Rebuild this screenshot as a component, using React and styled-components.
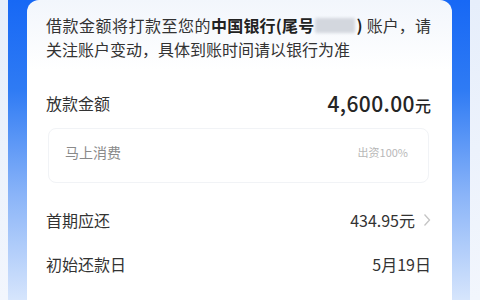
import React from "react";
import styled, { createGlobalStyle } from "styled-components";

const Global = createGlobalStyle`
  html, body { margin: 0; padding: 0; }
  body {
    font-family: "Noto Sans CJK SC", "Noto Sans", sans-serif;
    background: #eef3fb;
    -webkit-font-smoothing: antialiased;
  }
`;

const Page = styled.div`
  height: 300px;
  overflow: hidden;
  padding: 0 10px 0 8px;
  background: linear-gradient(180deg, #e6eefb 0%, #f2f6fd 100%);
`;

const Frame = styled.div`
  height: 100%;
  padding: 0 18px 0 19px;
  background: linear-gradient(180deg, #1768f5 0%, #2f7bf4 30%, #8ab4f8 65%, #d6e5fc 100%);
`;

const Card = styled.div`
  height: 100%;
  box-sizing: border-box;
  padding: 13px 21px 0 19px;
  border-radius: 12px 12px 0 0;
  background: linear-gradient(180deg, #f2f6fc 0px, #ffffff 70px);
  color: #333;
`;

const Notice = styled.div`
  font-size: 16px;
  line-height: 24px;
  color: #333;
`;

const NoticeLine = styled.div`
  display: flex;
  align-items: center;
  white-space: nowrap;
  justify-content: ${(p) => (p.$spread ? "space-between" : "flex-start")};
`;

const Group = styled.span`
  display: flex;
  align-items: center;
  flex-shrink: 0;
`;

const Lead = styled.span`
  letter-spacing: 0.5px;
`;

const Strong = styled.b`
  font-weight: 700;
  color: #222;
  letter-spacing: 0.2px;
`;

const Tail = styled.span`
  margin-left: 4px;
`;

const Masked = styled.span`
  display: inline-block;
  width: 40px;
  height: 15px;
  margin: 0 1px;
  background: #d3d7de;
  filter: blur(1.5px);
  border-radius: 2px;
`;

const Row = styled.div`
  display: flex;
  align-items: center;
  justify-content: space-between;
  height: ${(p) => p.$h || 44}px;
  margin-top: ${(p) => p.$mt || 0}px;
`;

const Label = styled.span`
  font-size: 16px;
  color: #333;
`;

const Amount = styled.span`
  font-size: 21px;
  font-weight: 500;
  color: #252525;
  letter-spacing: 0.4px;
`;

const Unit = styled.span`
  font-size: 16px;
  font-weight: 500;
  letter-spacing: 0;
`;

const Funder = styled.div`
  margin: 10px 2px 0 2px;
  height: 55px;
  box-sizing: border-box;
  padding: 14px 20px 0 16px;
  border: 1px solid #f1f3f6;
  border-radius: 8px;
  display: flex;
  justify-content: space-between;
  align-items: flex-start;
`;

const FunderName = styled.span`
  font-size: 14px;
  line-height: 18px;
  color: #8a8a8a;
`;

const FunderShare = styled.span`
  font-size: 11px;
  line-height: 18px;
  color: #b8b8b8;
`;

const Value = styled.span`
  display: flex;
  align-items: center;
  font-size: 16px;
  color: #333;
`;

const Chevron = styled.svg`
  margin-left: 8px;
  width: 8px;
  height: 14px;
`;

export default function App() {
  return (
    <>
      <Global />
      <Page>
        <Frame>
          <Card>
            <Notice>
              <NoticeLine $spread>
                <Group>
                  <Lead>借款金额将打款至您的</Lead>
                  <Strong>中国银行(尾号</Strong>
                  <Masked />
                  <Strong>)</Strong>
                  <Tail>账户，</Tail>
                </Group>
                <span>请</span>
              </NoticeLine>
              <NoticeLine>关注账户变动，具体到账时间请以银行为准</NoticeLine>
            </Notice>
            <Row $h={30} $mt={27}>
              <Label>放款金额</Label>
              <Amount>
                4,600.00<Unit>元</Unit>
              </Amount>
            </Row>
            <Funder>
              <FunderName>马上消费</FunderName>
              <FunderShare>出资100%</FunderShare>
            </Funder>
            <Row $mt={15}>
              <Label>首期应还</Label>
              <Value>
                434.95元
                <Chevron viewBox="0 0 8 14">
                  <path d="M1.5 1.5 L6.5 7 L1.5 12.5" fill="none" stroke="#c4c4c4" strokeWidth="1.3" />
                </Chevron>
              </Value>
            </Row>
            <Row>
              <Label>初始还款日</Label>
              <Value>5月19日</Value>
            </Row>
          </Card>
        </Frame>
      </Page>
    </>
  );
}
